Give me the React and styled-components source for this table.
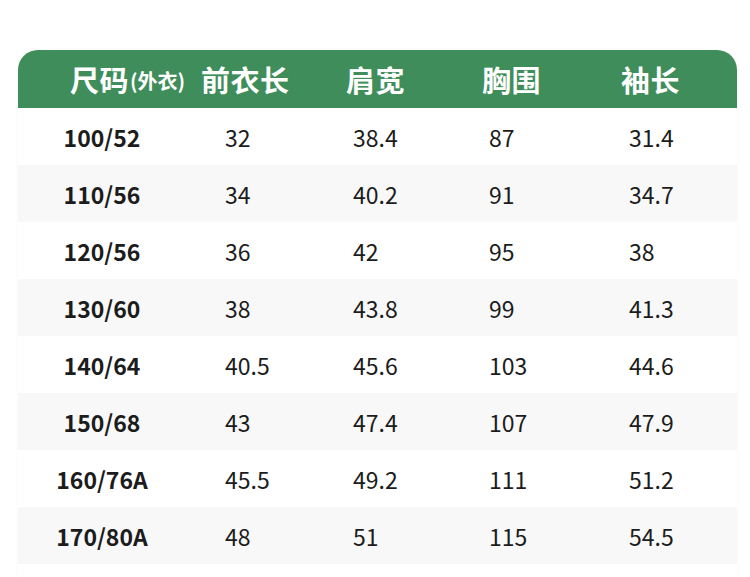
import React from "react";
import styled, { createGlobalStyle } from "styled-components";

const GlobalStyle = createGlobalStyle`
  html, body {
    margin: 0;
    padding: 0;
    background: #ffffff;
    font-family: "Noto Sans CJK SC", "Noto Sans", sans-serif;
  }
`;

const columns = [
  { width: 168, headPad: 52, dataPad: 0, center: true },
  { width: 144, headPad: 15, dataPad: 39 },
  { width: 136, headPad: 16, dataPad: 23 },
  { width: 139, headPad: 16, dataPad: 23 },
  { width: 132, headPad: 16, dataPad: 24 },
];

const rows = [
  ["100/52", "32", "38.4", "87", "31.4"],
  ["110/56", "34", "40.2", "91", "34.7"],
  ["120/56", "36", "42", "95", "38"],
  ["130/60", "38", "43.8", "99", "41.3"],
  ["140/64", "40.5", "45.6", "103", "44.6"],
  ["150/68", "43", "47.4", "107", "47.9"],
  ["160/76A", "45.5", "49.2", "111", "51.2"],
  ["170/80A", "48", "51", "115", "54.5"],
];

const Page = styled.div`
  padding: 50px 0 0 18px;
  height: 577px;
  box-sizing: border-box;
  overflow: hidden;
`;

const Table = styled.div`
  width: 719px;
  box-shadow: 0 0 4px rgba(0, 0, 0, 0.035);
  border-radius: 20px 20px 0 0;
`;

const grid = columns.map((c) => `${c.width}px`).join(" ");

const HeaderRow = styled.div`
  display: grid;
  grid-template-columns: ${grid};
  height: 58px;
  background: #3f8d5a;
  border-radius: 20px 20px 0 0;
  color: #ffffff;
`;

const HeadCell = styled.div`
  display: flex;
  align-items: center;
  padding-left: ${(p) => p.$pad}px;
  font-size: 29px;
  font-weight: 700;
  letter-spacing: 0.5px;
  white-space: nowrap;
`;

const Small = styled.span`
  font-size: 20px;
  letter-spacing: 0;
  margin-left: 1px;
  margin-top: 2px;
`;

const Row = styled.div`
  display: grid;
  grid-template-columns: ${grid};
  height: 57px;
  background: ${(p) => (p.$alt ? "#f8f8f8" : "#ffffff")};
`;

const Cell = styled.div`
  display: flex;
  align-items: center;
  justify-content: ${(p) => (p.$center ? "center" : "flex-start")};
  padding-left: ${(p) => p.$pad}px;
  font-size: 23px;
  font-weight: ${(p) => (p.$bold ? 700 : 400)};
  color: #1c1c1c;
`;

export default function App() {
  return (
    <>
      <GlobalStyle />
      <Page>
        <Table>
          <HeaderRow>
            <HeadCell $pad={columns[0].headPad}>
              尺码<Small>(外衣)</Small>
            </HeadCell>
            <HeadCell $pad={columns[1].headPad}>前衣长</HeadCell>
            <HeadCell $pad={columns[2].headPad}>肩宽</HeadCell>
            <HeadCell $pad={columns[3].headPad}>胸围</HeadCell>
            <HeadCell $pad={columns[4].headPad}>袖长</HeadCell>
          </HeaderRow>
          {rows.map((r, i) => (
            <Row key={r[0]} $alt={i % 2 === 1}>
              {r.map((v, j) => (
                <Cell
                  key={j}
                  $pad={columns[j].dataPad}
                  $center={columns[j].center}
                  $bold={j === 0}
                >
                  {v}
                </Cell>
              ))}
            </Row>
          ))}
          <Row $alt={false} />
        </Table>
      </Page>
    </>
  );
}
